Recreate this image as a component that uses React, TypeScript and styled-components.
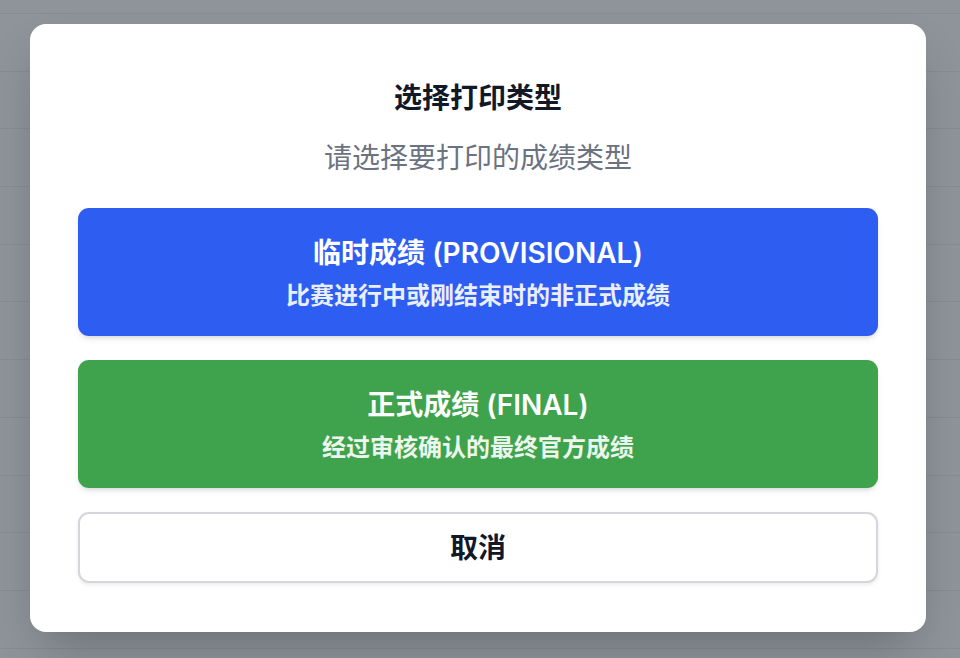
import React from "react";
import styled, { createGlobalStyle } from "styled-components";

const GlobalStyle = createGlobalStyle`
  html, body {
    margin: 0;
    padding: 0;
    height: 100%;
    background: #ffffff;
    font-family: Inter, "Noto Sans CJK SC", "Noto Sans", sans-serif;
  }
  * { box-sizing: border-box; }
`;

const Page = styled.div`
  position: relative;
  width: 100%;
  height: 100vh;
  overflow: hidden;
  background: #ffffff;
`;

const TableBack = styled.div`
  display: flex;
  flex-direction: column;
  padding-top: 13px;
`;

const TableRow = styled.div`
  height: 57.7px;
  border-top: 1px solid #eceef1;
  flex-shrink: 0;
`;

const Overlay = styled.div`
  position: absolute;
  inset: 0;
  background: rgba(31, 41, 55, 0.5);
  display: flex;
  align-items: flex-start;
  justify-content: flex-start;
  padding: 24px 0 0 30px;
`;

const Modal = styled.div`
  width: 896px;
  height: 608px;
  background: #ffffff;
  border-radius: 16px;
  padding: 48px 48px 49px;
  display: flex;
  flex-direction: column;
  box-shadow: 0 25px 50px -12px rgba(0, 0, 0, 0.25);
`;

const Title = styled.h2`
  margin: 5px 0 0;
  text-align: center;
  font-size: 28px;
  line-height: 42px;
  font-weight: 600;
  color: #111827;
`;

const Subtitle = styled.p`
  margin: 18px 0 29px;
  text-align: center;
  font-size: 28px;
  line-height: 42px;
  font-weight: 400;
  color: #6b7280;
`;

const Options = styled.div`
  display: flex;
  flex-direction: column;
  gap: 24px;
`;

const OptionButton = styled.button<{ $tone: "blue" | "green" }>`
  width: 100%;
  height: 128px;
  border: none;
  border-radius: 11px;
  padding: 24px 24px;
  background: ${(p) => (p.$tone === "blue" ? "#2d5ef1" : "#3fa34d")};
  color: #ffffff;
  font-family: inherit;
  display: flex;
  flex-direction: column;
  align-items: center;
  cursor: pointer;
  box-shadow: 0 4px 6px -1px rgba(0, 0, 0, 0.1), 0 2px 4px -2px rgba(0, 0, 0, 0.1);
`;

const OptionTitle = styled.span`
  font-size: 28px;
  line-height: 42px;
  font-weight: 600;
`;

const OptionDesc = styled.span`
  margin-top: 6px;
  font-size: 24px;
  line-height: 32px;
  font-weight: 600;
  opacity: 0.9;
`;

const CancelButton = styled.button`
  width: 100%;
  height: 71px;
  border: 2px solid #d4d6dc;
  border-radius: 11px;
  background: #ffffff;
  color: #111827;
  font-family: inherit;
  font-size: 28px;
  line-height: 42px;
  font-weight: 600;
  display: flex;
  align-items: center;
  justify-content: center;
  cursor: pointer;
  box-shadow: 0 2px 4px rgba(0, 0, 0, 0.08);
`;

export default function App() {
  const rows = Array.from({ length: 12 });
  return (
    <>
      <GlobalStyle />
      <Page>
        <TableBack>
          {rows.map((_, i) => (
            <TableRow key={i} />
          ))}
        </TableBack>
        <Overlay>
          <Modal>
            <Title>选择打印类型</Title>
            <Subtitle>请选择要打印的成绩类型</Subtitle>
            <Options>
              <OptionButton $tone="blue">
                <OptionTitle>临时成绩 (PROVISIONAL)</OptionTitle>
                <OptionDesc>比赛进行中或刚结束时的非正式成绩</OptionDesc>
              </OptionButton>
              <OptionButton $tone="green">
                <OptionTitle>正式成绩 (FINAL)</OptionTitle>
                <OptionDesc>经过审核确认的最终官方成绩</OptionDesc>
              </OptionButton>
              <CancelButton>取消</CancelButton>
            </Options>
          </Modal>
        </Overlay>
      </Page>
    </>
  );
}
